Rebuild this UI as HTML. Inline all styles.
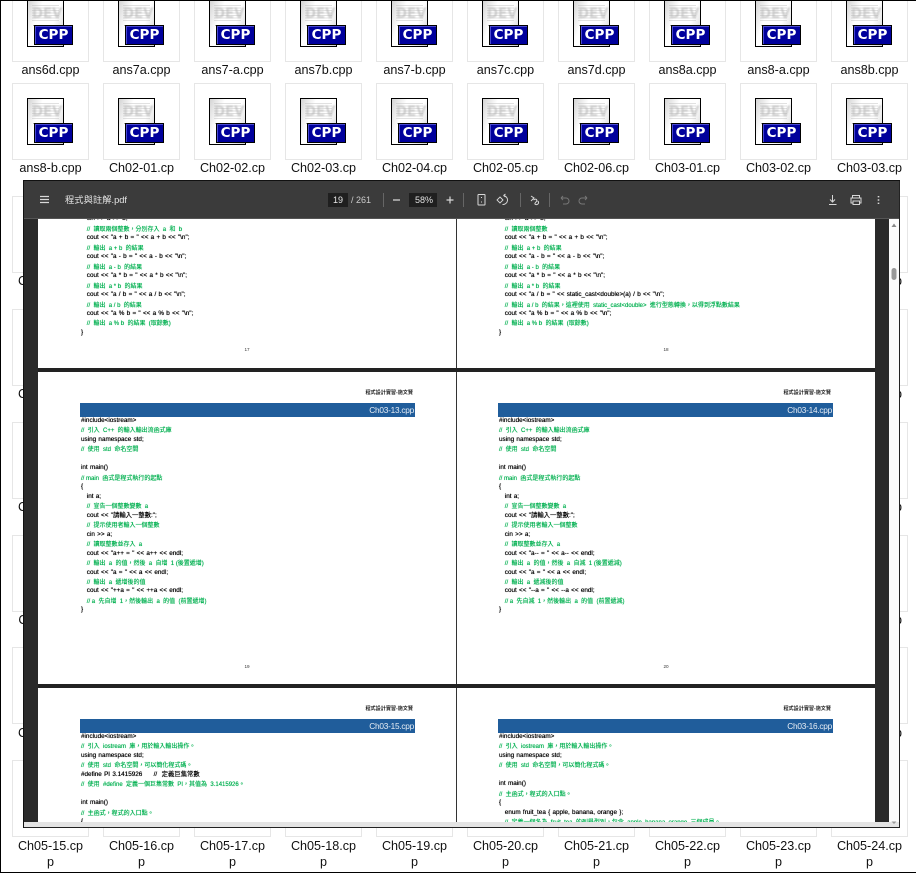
<!DOCTYPE html>
<html><head><meta charset="utf-8"><style>
html,body{margin:0;padding:0;width:916px;height:873px;overflow:hidden;background:#fff}
*{box-sizing:border-box}
body{position:relative;font-family:"Liberation Sans","Noto Sans CJK TC",sans-serif}
.t{position:absolute;width:77px;height:77px;border:1px solid #e6e6e6;background:#fff}
.pg{position:absolute;left:13.5px;top:13.5px;width:37px;height:47px;border:1px solid #000;background:linear-gradient(110deg,#d4d4d4 0,#fff 30%,#fff 65%,#d0d0d0 100%);overflow:hidden;display:block;font-style:normal}
.pg b{position:absolute;left:4px;top:6px;font:bold 14px/15px "DejaVu Sans",sans-serif;color:#d2d2d2;transform:scaleX(.95);transform-origin:0 0;filter:blur(.7px)}
.pg u{position:absolute;left:4px;top:4px;width:27px;height:16px;background:repeating-linear-gradient(#b4b4b4 0 1px,transparent 1px 2.5px);opacity:.4;display:block;z-index:1}
.pg s{position:absolute;left:5px;top:24px;width:8px;height:1px;background:#aaa;display:block}
.bd{position:absolute;left:21px;top:39px;width:39px;height:20px;border:1px solid #000;background:#00009c;box-shadow:inset 1px 1px 0 #4a4ad0;color:#fff;font:bold 13.5px/18px "DejaVu Sans",sans-serif;text-align:center;font-style:normal;display:block}
.l{position:absolute;width:91px;text-align:center;font-size:12.6px;line-height:16px;color:#111}
.v{position:absolute;left:23px;top:180px;width:877px;height:648px;background:#2a2a2a;border:1px solid #111;border-bottom:1px solid #222;}
.p{position:absolute;background:#fff;overflow:hidden}
.c{position:absolute;font-size:6.35px;color:#000;filter:blur(.2px);word-spacing:.5px;text-shadow:0 0 .5px #000}
.c div{height:9.47px;line-height:9.47px;white-space:pre}
.c .g{color:#00b050;font-size:6px;position:relative;top:2px;word-spacing:0;text-shadow:0 0 .5px #00b050}
.c .i{padding-left:5.8px}
.bar{position:absolute;height:13.5px;background:#205d9b;color:#e8eef5;font-size:8.3px;letter-spacing:-.25px;line-height:14px;text-align:right;width:335px;padding-right:1px}
.h{position:absolute;font-size:5.1px;color:#222;font-weight:bold;line-height:8px;text-align:right;width:100px;filter:blur(.2px)}
.n{position:absolute;font-size:4.6px;color:#333;line-height:6px;width:12px;text-align:center}
.tb{position:absolute;color:#ddd;white-space:pre}
</style></head><body>

<div class="t" style="left:12px;top:-15px"><i class="pg"><u></u><b>DEV</b><s></s></i><i class="bd">CPP</i></div>
<div class="t" style="left:103px;top:-15px"><i class="pg"><u></u><b>DEV</b><s></s></i><i class="bd">CPP</i></div>
<div class="t" style="left:194px;top:-15px"><i class="pg"><u></u><b>DEV</b><s></s></i><i class="bd">CPP</i></div>
<div class="t" style="left:285px;top:-15px"><i class="pg"><u></u><b>DEV</b><s></s></i><i class="bd">CPP</i></div>
<div class="t" style="left:376px;top:-15px"><i class="pg"><u></u><b>DEV</b><s></s></i><i class="bd">CPP</i></div>
<div class="t" style="left:467px;top:-15px"><i class="pg"><u></u><b>DEV</b><s></s></i><i class="bd">CPP</i></div>
<div class="t" style="left:558px;top:-15px"><i class="pg"><u></u><b>DEV</b><s></s></i><i class="bd">CPP</i></div>
<div class="t" style="left:649px;top:-15px"><i class="pg"><u></u><b>DEV</b><s></s></i><i class="bd">CPP</i></div>
<div class="t" style="left:740px;top:-15px"><i class="pg"><u></u><b>DEV</b><s></s></i><i class="bd">CPP</i></div>
<div class="t" style="left:831px;top:-15px"><i class="pg"><u></u><b>DEV</b><s></s></i><i class="bd">CPP</i></div>

<div class="l" style="left:5px;top:62px">ans6d.cpp</div>
<div class="l" style="left:96px;top:62px">ans7a.cpp</div>
<div class="l" style="left:187px;top:62px">ans7-a.cpp</div>
<div class="l" style="left:278px;top:62px">ans7b.cpp</div>
<div class="l" style="left:369px;top:62px">ans7-b.cpp</div>
<div class="l" style="left:460px;top:62px">ans7c.cpp</div>
<div class="l" style="left:551px;top:62px">ans7d.cpp</div>
<div class="l" style="left:642px;top:62px">ans8a.cpp</div>
<div class="l" style="left:733px;top:62px">ans8-a.cpp</div>
<div class="l" style="left:824px;top:62px">ans8b.cpp</div>

<div class="t" style="left:12px;top:83px"><i class="pg"><u></u><b>DEV</b><s></s></i><i class="bd">CPP</i></div>
<div class="t" style="left:103px;top:83px"><i class="pg"><u></u><b>DEV</b><s></s></i><i class="bd">CPP</i></div>
<div class="t" style="left:194px;top:83px"><i class="pg"><u></u><b>DEV</b><s></s></i><i class="bd">CPP</i></div>
<div class="t" style="left:285px;top:83px"><i class="pg"><u></u><b>DEV</b><s></s></i><i class="bd">CPP</i></div>
<div class="t" style="left:376px;top:83px"><i class="pg"><u></u><b>DEV</b><s></s></i><i class="bd">CPP</i></div>
<div class="t" style="left:467px;top:83px"><i class="pg"><u></u><b>DEV</b><s></s></i><i class="bd">CPP</i></div>
<div class="t" style="left:558px;top:83px"><i class="pg"><u></u><b>DEV</b><s></s></i><i class="bd">CPP</i></div>
<div class="t" style="left:649px;top:83px"><i class="pg"><u></u><b>DEV</b><s></s></i><i class="bd">CPP</i></div>
<div class="t" style="left:740px;top:83px"><i class="pg"><u></u><b>DEV</b><s></s></i><i class="bd">CPP</i></div>
<div class="t" style="left:831px;top:83px"><i class="pg"><u></u><b>DEV</b><s></s></i><i class="bd">CPP</i></div>

<div class="l" style="left:5px;top:160px">ans8-b.cpp</div>
<div class="l" style="left:96px;top:160px">Ch02-01.cp</div>
<div class="l" style="left:187px;top:160px">Ch02-02.cp</div>
<div class="l" style="left:278px;top:160px">Ch02-03.cp</div>
<div class="l" style="left:369px;top:160px">Ch02-04.cp</div>
<div class="l" style="left:460px;top:160px">Ch02-05.cp</div>
<div class="l" style="left:551px;top:160px">Ch02-06.cp</div>
<div class="l" style="left:642px;top:160px">Ch03-01.cp</div>
<div class="l" style="left:733px;top:160px">Ch03-02.cp</div>
<div class="l" style="left:824px;top:160px">Ch03-03.cp</div>

<div class="t" style="left:12px;top:196px"></div><div class="l" style="left:5px;top:273px">Ch03-04.cp<br>p</div>
<div class="t" style="left:12px;top:309px"></div><div class="l" style="left:5px;top:386px">Ch03-14.cp<br>p</div>
<div class="t" style="left:12px;top:422px"></div><div class="l" style="left:5px;top:499px">Ch04-01.cp<br>p</div>
<div class="t" style="left:12px;top:535px"></div><div class="l" style="left:5px;top:612px">Ch04-11.cp<br>p</div>
<div class="t" style="left:12px;top:647px"></div><div class="l" style="left:5px;top:725px">Ch05-05.cp<br>p</div>
<div class="t" style="left:831px;top:196px"></div><div class="l" style="left:824px;top:273px">Ch03-13.cp<br>p</div>
<div class="t" style="left:831px;top:309px"></div><div class="l" style="left:824px;top:386px">Ch03-23.cp<br>p</div>
<div class="t" style="left:831px;top:422px"></div><div class="l" style="left:824px;top:499px">Ch04-10.cp<br>p</div>
<div class="t" style="left:831px;top:535px"></div><div class="l" style="left:824px;top:612px">Ch04-20.cp<br>p</div>
<div class="t" style="left:831px;top:647px"></div><div class="l" style="left:824px;top:725px">Ch05-14.cp<br>p</div>

<div class="t" style="left:12px;top:760px"></div>
<div class="t" style="left:103px;top:760px"></div>
<div class="t" style="left:194px;top:760px"></div>
<div class="t" style="left:285px;top:760px"></div>
<div class="t" style="left:376px;top:760px"></div>
<div class="t" style="left:467px;top:760px"></div>
<div class="t" style="left:558px;top:760px"></div>
<div class="t" style="left:649px;top:760px"></div>
<div class="t" style="left:740px;top:760px"></div>
<div class="t" style="left:831px;top:760px"></div>

<div class="l" style="left:5px;top:838px">Ch05-15.cp<br>p</div>
<div class="l" style="left:96px;top:838px">Ch05-16.cp<br>p</div>
<div class="l" style="left:187px;top:838px">Ch05-17.cp<br>p</div>
<div class="l" style="left:278px;top:838px">Ch05-18.cp<br>p</div>
<div class="l" style="left:369px;top:838px">Ch05-19.cp<br>p</div>
<div class="l" style="left:460px;top:838px">Ch05-20.cp<br>p</div>
<div class="l" style="left:551px;top:838px">Ch05-21.cp<br>p</div>
<div class="l" style="left:642px;top:838px">Ch05-22.cp<br>p</div>
<div class="l" style="left:733px;top:838px">Ch05-23.cp<br>p</div>
<div class="l" style="left:824px;top:838px">Ch05-24.cp<br>p</div>

<div class="v"></div>

<!-- pages -->
<div class="p" style="left:38px;top:219px;width:836.5px;height:149px"></div>
<div class="p" style="left:38px;top:372px;width:836.5px;height:312px"></div>
<div class="p" style="left:38px;top:688px;width:836.5px;height:134px"></div>
<div style="position:absolute;left:456px;top:219px;width:1px;height:603px;background:#333"></div>
<div style="position:absolute;left:38px;top:368px;width:837px;height:4px;background:#222"></div>
<div style="position:absolute;left:38px;top:684px;width:837px;height:4px;background:#222"></div>

<!-- page 17 / 18 -->
<div style="position:absolute;left:0;top:219px;width:916px;height:149px;overflow:hidden">
<div class="c" style="left:81px;top:-4.7px">
<div class="i">cin &gt;&gt; a &gt;&gt; b;</div>
<div class="g i">//  讀取兩個整數，分別存入  a  和  b</div>
<div class="i">cout &lt;&lt; "a + b = " &lt;&lt; a + b &lt;&lt; "\n";</div>
<div class="g i">//  輸出  a + b  的結果</div>
<div class="i">cout &lt;&lt; "a - b = " &lt;&lt; a - b &lt;&lt; "\n";</div>
<div class="g i">//  輸出  a - b  的結果</div>
<div class="i">cout &lt;&lt; "a * b = " &lt;&lt; a * b &lt;&lt; "\n";</div>
<div class="g i">//  輸出  a * b  的結果</div>
<div class="i">cout &lt;&lt; "a / b = " &lt;&lt; a / b &lt;&lt; "\n";</div>
<div class="g i">//  輸出  a / b  的結果</div>
<div class="i">cout &lt;&lt; "a % b = " &lt;&lt; a % b &lt;&lt; "\n";</div>
<div class="g i">//  輸出  a % b  的結果  (取餘數)</div>
<div>}</div>
</div>
<div class="n" style="left:241px;top:128px">17</div>
<div class="c" style="left:499px;top:-4.7px">
<div class="i">cin &gt;&gt; a &gt;&gt; b;</div>
<div class="g i">//  讀取兩個整數</div>
<div class="i">cout &lt;&lt; "a + b = " &lt;&lt; a + b &lt;&lt; "\n";</div>
<div class="g i">//  輸出  a + b  的結果</div>
<div class="i">cout &lt;&lt; "a - b = " &lt;&lt; a - b &lt;&lt; "\n";</div>
<div class="g i">//  輸出  a - b  的結果</div>
<div class="i">cout &lt;&lt; "a * b = " &lt;&lt; a * b &lt;&lt; "\n";</div>
<div class="g i">//  輸出  a * b  的結果</div>
<div class="i">cout &lt;&lt; "a / b = " &lt;&lt; static_cast&lt;double&gt;(a) / b &lt;&lt; "\n";</div>
<div class="g i">//  輸出  a / b  的結果，這裡使用  static_cast&lt;double&gt;  進行型態轉換，以得到浮點數結果</div>
<div class="i">cout &lt;&lt; "a % b = " &lt;&lt; a % b &lt;&lt; "\n";</div>
<div class="g i">//  輸出  a % b  的結果  (取餘數)</div>
<div>}</div>
</div>
<div class="n" style="left:660px;top:128px">18</div>
</div>

<!-- page 19 / 20 -->
<div class="h" style="left:313px;top:389px">程式設計實習-施文賢</div>
<div class="bar" style="left:80px;top:403px">Ch03-13.cpp</div>
<div class="c" style="left:81px;top:416px">
<div>#include&lt;iostream&gt;</div>
<div class="g">//  引入  C++  的輸入輸出流函式庫</div>
<div>using namespace std;</div>
<div class="g">//  使用  std  命名空間</div>
<div> </div>
<div>int main()</div>
<div class="g">// main  函式是程式執行的起點</div>
<div>{</div>
<div class="i">int a;</div>
<div class="g i">//  宣告一個整數變數  a</div>
<div class="i">cout &lt;&lt; "請輸入一整數:";</div>
<div class="g i">//  提示使用者輸入一個整數</div>
<div class="i">cin &gt;&gt; a;</div>
<div class="g i">//  讀取整數並存入  a</div>
<div class="i">cout &lt;&lt; "a++ = " &lt;&lt; a++ &lt;&lt; endl;</div>
<div class="g i">//  輸出  a  的值，然後  a  自增  1 (後置遞增)</div>
<div class="i">cout &lt;&lt; "a = " &lt;&lt; a &lt;&lt; endl;</div>
<div class="g i">//  輸出  a  遞增後的值</div>
<div class="i">cout &lt;&lt; "++a = " &lt;&lt; ++a &lt;&lt; endl;</div>
<div class="g i">// a  先自增  1，然後輸出  a  的值  (前置遞增)</div>
<div>}</div>
</div>
<div class="n" style="left:241px;top:664px">19</div>

<div class="h" style="left:731px;top:389px">程式設計實習-施文賢</div>
<div class="bar" style="left:498px;top:403px">Ch03-14.cpp</div>
<div class="c" style="left:499px;top:416px">
<div>#include&lt;iostream&gt;</div>
<div class="g">//  引入  C++  的輸入輸出流函式庫</div>
<div>using namespace std;</div>
<div class="g">//  使用  std  命名空間</div>
<div> </div>
<div>int main()</div>
<div class="g">// main  函式是程式執行的起點</div>
<div>{</div>
<div class="i">int a;</div>
<div class="g i">//  宣告一個整數變數  a</div>
<div class="i">cout &lt;&lt; "請輸入一整數:";</div>
<div class="g i">//  提示使用者輸入一個整數</div>
<div class="i">cin &gt;&gt; a;</div>
<div class="g i">//  讀取整數並存入  a</div>
<div class="i">cout &lt;&lt; "a-- = " &lt;&lt; a-- &lt;&lt; endl;</div>
<div class="g i">//  輸出  a  的值，然後  a  自減  1 (後置遞減)</div>
<div class="i">cout &lt;&lt; "a = " &lt;&lt; a &lt;&lt; endl;</div>
<div class="g i">//  輸出  a  遞減後的值</div>
<div class="i">cout &lt;&lt; "--a = " &lt;&lt; --a &lt;&lt; endl;</div>
<div class="g i">// a  先自減  1，然後輸出  a  的值  (前置遞減)</div>
<div>}</div>
</div>
<div class="n" style="left:660px;top:664px">20</div>

<!-- page 21 / 22 -->
<div style="position:absolute;left:0;top:688px;width:916px;height:134px;overflow:hidden">
<div class="h" style="left:313px;top:17px">程式設計實習-施文賢</div>
<div class="bar" style="left:80px;top:31px">Ch03-15.cpp</div>
<div class="c" style="left:81px;top:44px">
<div>#include&lt;iostream&gt;</div>
<div class="g">//  引入  iostream  庫，用於輸入輸出操作。</div>
<div>using namespace std;</div>
<div class="g">//  使用  std  命名空間，可以簡化程式碼。</div>
<div>#define PI 3.1415926     //  定義巨集常數</div>
<div class="g">//  使用  #define  定義一個巨集常數  PI，其值為  3.1415926。</div>
<div> </div>
<div>int main()</div>
<div class="g">//  主函式，程式的入口點。</div>
<div>{</div>
</div>
<div class="h" style="left:731px;top:17px">程式設計實習-施文賢</div>
<div class="bar" style="left:498px;top:31px">Ch03-16.cpp</div>
<div class="c" style="left:499px;top:44px">
<div>#include&lt;iostream&gt;</div>
<div class="g">//  引入  iostream  庫，用於輸入輸出操作。</div>
<div>using namespace std;</div>
<div class="g">//  使用  std  命名空間，可以簡化程式碼。</div>
<div> </div>
<div>int main()</div>
<div class="g">//  主函式，程式的入口點。</div>
<div>{</div>
<div class="i">enum fruit_tea { apple, banana, orange };</div>
<div class="g i">//  定義一個名為  fruit_tea  的列舉型別，包含  apple, banana, orange  三個成員。</div>
</div>
</div>

<!-- toolbar -->
<div style="position:absolute;left:24px;top:181px;width:875px;height:37.5px;background:#3b3b3b;border-bottom:1px solid #555"></div>
<div class="tb" style="left:65px;top:193px;font-size:9.3px;line-height:14px;color:#e4e4e4">程式與註解.pdf</div>
<div style="position:absolute;left:328px;top:193px;width:20px;height:14px;background:#1f1f1f"></div>
<div class="tb" style="left:333px;top:193px;font-size:9px;line-height:14px;color:#e8e8e8">19</div>
<div class="tb" style="left:351px;top:193px;font-size:9px;line-height:14px;color:#ccc">/ 261</div>
<div style="position:absolute;left:409px;top:193px;width:28px;height:14px;background:#1f1f1f"></div>
<div class="tb" style="left:415px;top:193px;font-size:9px;line-height:14px;color:#e0e0e0">58%</div>

<svg style="position:absolute;left:0;top:0" width="916" height="873" fill="none" stroke="#d8d8d8" stroke-width="1">
<path d="M40 196.5h9M40 199.5h9M40 202.5h9" stroke-width="1.2"/>
<path d="M383.5 193v14M463.5 193v14M520.5 193v14M549.5 193v14" stroke="#666"/>
<path d="M393 200h7M446.5 200h7M450 196.5v7" stroke-width="1.2"/>
<rect x="478" y="194.5" width="7" height="10.5" rx=".5"/>
<path d="M481.5 197v1M481.5 201.5v1"/>
<path d="M503.5 195.5a4.5 4.5 0 1 1-1 9M503.5 195.5l2-1.5M503.5 195.5l2 1.5"/>
<path d="M500 197l3 3-3 3-3-3z" stroke-width=".9"/>
<path d="M531 196l3 2-3 3M533.5 200c2.5-2 4.5 0 2.5 2s-1 3 1 2.5 2-3 .5-3.5"/>
<path d="M561 198h5a3 3 0 0 1 0 6h-3M561 198l2-2M561 198l2 2" stroke="#777"/>
<path d="M587 198h-5a3 3 0 0 0 0 6h3M587 198l-2-2M587 198l-2 2" stroke="#777"/>
<path d="M832.5 195v6.5M830 199.5l2.5 2.5 2.5-2.5M829 204.5h7.5"/>
<path d="M852.5 198v-2.5h7v2.5M852.5 203H851v-5h10v5h-1.5M853 201h6.5v3.5H853z"/>
<path d="M878.5 196v1.4M878.5 199.3v1.4M878.5 202.6v1.4" stroke-width="1.6"/>
</svg>

<!-- scrollbars -->
<div style="position:absolute;left:889px;top:219px;width:10px;height:603px;background:#fbfbfb"></div>
<svg style="position:absolute;left:889px;top:219px" width="10" height="62"><path d="M2.5 8L5 4.500 7.500 8z" fill="#888"/><rect x="2.5" y="49" width="5" height="12" rx="2.5" fill="#999"/></svg>
<div style="position:absolute;left:24px;top:822px;width:875px;height:5px;background:#e4e4e4"></div>
<svg style="position:absolute;left:889px;top:820px" width="10" height="6"><path d="M2.5 1.5h5L5 4z" fill="#999"/></svg>
<div style="position:absolute;left:23px;top:827px;width:877px;height:1px;background:#222"></div>
<div style="position:absolute;left:899px;top:180px;width:1px;height:648px;background:#222"></div>
<div style="position:absolute;left:23px;top:180px;width:877px;height:1px;background:#111"></div>
<div style="position:absolute;left:23px;top:180px;width:1px;height:648px;background:#111"></div>

<!-- outer frame: top, left and bottom edges only -->
<div style="position:absolute;left:0;top:0;width:916px;height:873px;border:1px solid #000;border-right:0;pointer-events:none"></div>
</body></html>
